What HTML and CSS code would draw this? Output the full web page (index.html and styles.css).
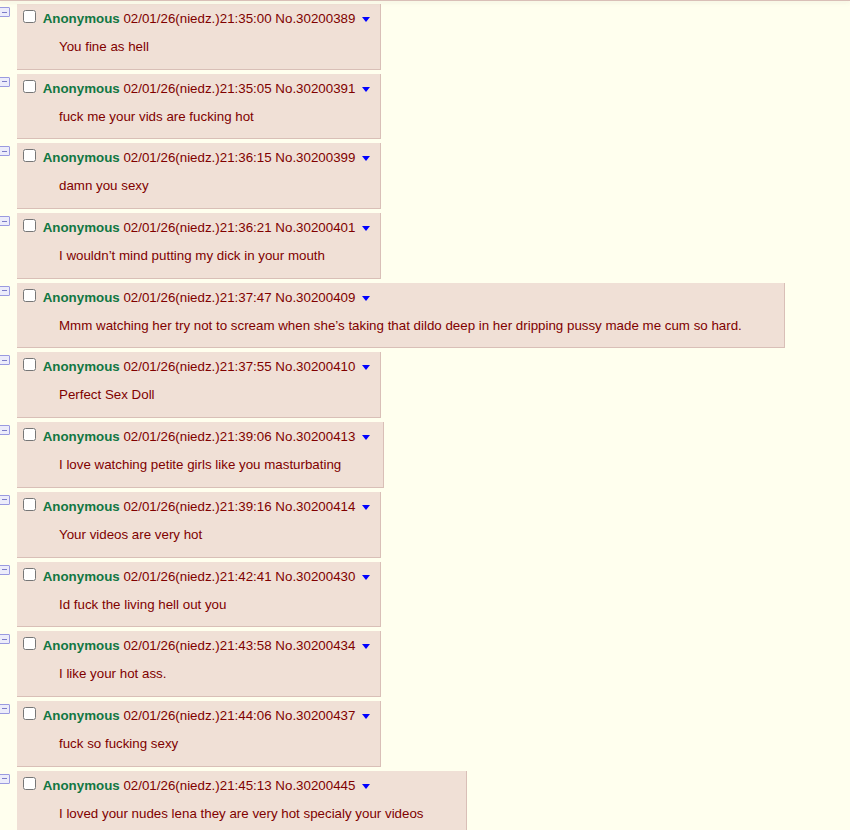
FILE: index.html
```html
<!DOCTYPE html>
<html lang="en">
<head>
    <meta charset="UTF-8">
    <title>Thread</title>
    <link rel="stylesheet" href="styles.css">
</head>
<body>
    <div class="topbar"></div>
    <div class="thread">
        <div class="reply-container">
            <span class="hide-btn"></span>
            <div class="post">
                <div class="post-info"><input type="checkbox"> <span class="name">Anonymous</span> <span class="date">02/01/26(niedz.)21:35:00</span> <span class="num">No.30200389</span><span class="menu-btn"></span></div>
                <blockquote class="message">You fine as hell</blockquote>
            </div>
        </div>
        <div class="reply-container">
            <span class="hide-btn"></span>
            <div class="post">
                <div class="post-info"><input type="checkbox"> <span class="name">Anonymous</span> <span class="date">02/01/26(niedz.)21:35:05</span> <span class="num">No.30200391</span><span class="menu-btn"></span></div>
                <blockquote class="message">fuck me your vids are fucking hot</blockquote>
            </div>
        </div>
        <div class="reply-container">
            <span class="hide-btn"></span>
            <div class="post">
                <div class="post-info"><input type="checkbox"> <span class="name">Anonymous</span> <span class="date">02/01/26(niedz.)21:36:15</span> <span class="num">No.30200399</span><span class="menu-btn"></span></div>
                <blockquote class="message">damn you sexy</blockquote>
            </div>
        </div>
        <div class="reply-container">
            <span class="hide-btn"></span>
            <div class="post">
                <div class="post-info"><input type="checkbox"> <span class="name">Anonymous</span> <span class="date">02/01/26(niedz.)21:36:21</span> <span class="num">No.30200401</span><span class="menu-btn"></span></div>
                <blockquote class="message">I wouldn’t mind putting my dick in your mouth</blockquote>
            </div>
        </div>
        <div class="reply-container">
            <span class="hide-btn"></span>
            <div class="post">
                <div class="post-info"><input type="checkbox"> <span class="name">Anonymous</span> <span class="date">02/01/26(niedz.)21:37:47</span> <span class="num">No.30200409</span><span class="menu-btn"></span></div>
                <blockquote class="message">Mmm watching her try not to scream when she’s taking that dildo deep in her dripping pussy made me cum so hard.</blockquote>
            </div>
        </div>
        <div class="reply-container">
            <span class="hide-btn"></span>
            <div class="post">
                <div class="post-info"><input type="checkbox"> <span class="name">Anonymous</span> <span class="date">02/01/26(niedz.)21:37:55</span> <span class="num">No.30200410</span><span class="menu-btn"></span></div>
                <blockquote class="message">Perfect Sex Doll</blockquote>
            </div>
        </div>
        <div class="reply-container">
            <span class="hide-btn"></span>
            <div class="post">
                <div class="post-info"><input type="checkbox"> <span class="name">Anonymous</span> <span class="date">02/01/26(niedz.)21:39:06</span> <span class="num">No.30200413</span><span class="menu-btn"></span></div>
                <blockquote class="message">I love watching petite girls like you masturbating</blockquote>
            </div>
        </div>
        <div class="reply-container">
            <span class="hide-btn"></span>
            <div class="post">
                <div class="post-info"><input type="checkbox"> <span class="name">Anonymous</span> <span class="date">02/01/26(niedz.)21:39:16</span> <span class="num">No.30200414</span><span class="menu-btn"></span></div>
                <blockquote class="message">Your videos are very hot</blockquote>
            </div>
        </div>
        <div class="reply-container">
            <span class="hide-btn"></span>
            <div class="post">
                <div class="post-info"><input type="checkbox"> <span class="name">Anonymous</span> <span class="date">02/01/26(niedz.)21:42:41</span> <span class="num">No.30200430</span><span class="menu-btn"></span></div>
                <blockquote class="message">Id fuck the living hell out you</blockquote>
            </div>
        </div>
        <div class="reply-container">
            <span class="hide-btn"></span>
            <div class="post">
                <div class="post-info"><input type="checkbox"> <span class="name">Anonymous</span> <span class="date">02/01/26(niedz.)21:43:58</span> <span class="num">No.30200434</span><span class="menu-btn"></span></div>
                <blockquote class="message">I like your hot ass.</blockquote>
            </div>
        </div>
        <div class="reply-container">
            <span class="hide-btn"></span>
            <div class="post">
                <div class="post-info"><input type="checkbox"> <span class="name">Anonymous</span> <span class="date">02/01/26(niedz.)21:44:06</span> <span class="num">No.30200437</span><span class="menu-btn"></span></div>
                <blockquote class="message">fuck so fucking sexy</blockquote>
            </div>
        </div>
        <div class="reply-container">
            <span class="hide-btn"></span>
            <div class="post">
                <div class="post-info"><input type="checkbox"> <span class="name">Anonymous</span> <span class="date">02/01/26(niedz.)21:45:13</span> <span class="num">No.30200445</span><span class="menu-btn"></span></div>
                <blockquote class="message">I loved your nudes lena they are very hot specialy your videos</blockquote>
            </div>
        </div>
    </div>
</body>
</html>
```

FILE: styles.css
```css
body {
    margin: 0;
    padding-top: 4px;
    background-color: #ffffee;
    color: #800000;
    font-family: "Liberation Sans", Arial, sans-serif;
    font-size: 10pt;
    overflow: hidden;
}
.topbar {
    position: fixed;
    top: 0;
    left: 0;
    right: 0;
    height: 1px;
    background-color: #d9bfb7;
    box-shadow: 0 1px 4px rgba(120, 120, 100, 0.25);
    z-index: 2;
}
.reply-container {
    display: flex;
    align-items: flex-start;
    margin-bottom: 4px;
}
.hide-btn {
    box-sizing: border-box;
    width: 11px;
    height: 10px;
    margin: 3px 7px 0 -1px;
    border: 1px solid #9a9ae0;
    border-radius: 1px;
    background-color: #ececfa;
    display: flex;
    align-items: center;
    justify-content: center;
}
.hide-btn::after {
    content: "";
    width: 5px;
    height: 1px;
    background-color: #7c7cc8;
}
.post {
    background-color: #f0e0d6;
    border-right: 1px solid #d9bfb7;
    border-bottom: 1px solid #d9bfb7;
    padding: 2px;
}
.post-info {
    white-space: nowrap;
    padding-top: 1px;
}
.post-info input {
    width: 13px;
    height: 13px;
    margin: 3px 3px 3px 4px;
}
.name {
    color: #117743;
    font-weight: bold;
}
.menu-btn {
    display: inline-block;
    width: 0;
    height: 0;
    margin: 0 8px 0 7px;
    border-left: 4px solid transparent;
    border-right: 4px solid transparent;
    border-top: 5px solid #0000ff;
    vertical-align: 1px;
}
.message {
    margin: 13px 40px 12.7px;
    white-space: nowrap;
}
```
